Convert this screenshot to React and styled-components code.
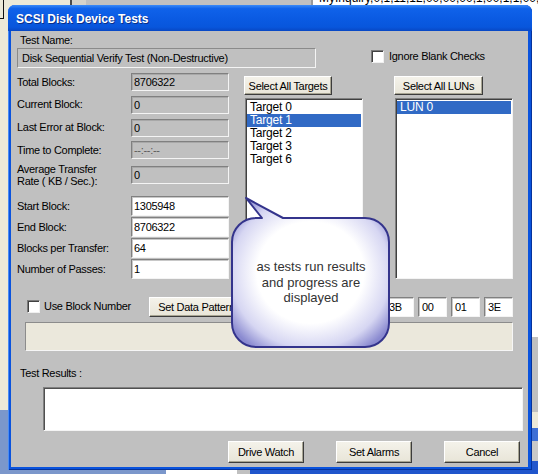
import React from 'react';
import styled, { createGlobalStyle } from 'styled-components';

const GlobalStyle = createGlobalStyle`
  html, body { margin: 0; padding: 0; }
  body {
    background: #ece9d8;
    font-family: 'Liberation Sans', Arial, sans-serif;
  }
`;

const Desktop = styled.div`
  position: relative;
  width: 538px;
  height: 474px;
  overflow: hidden;
  background: #ece9d8;
  font-family: 'Liberation Sans', Arial, sans-serif;
`;

/* windows lying behind the dialog */
const BackWindow = styled.div`
  position: absolute;
  left: ${p => p.$x}px;
  top: ${p => p.$y}px;
  width: ${p => p.$w}px;
  height: ${p => p.$h}px;
  background: ${p => p.$bg};
  box-sizing: border-box;
  border-left: ${p => (p.$edge ? `2px solid ${p.$edge}` : 'none')};
  overflow: hidden;
`;

const BackText = styled.div`
  position: absolute;
  left: ${p => p.$x}px;
  top: ${p => p.$y}px;
  font-size: 12px;
  line-height: 14px;
  color: #000;
  white-space: nowrap;
`;

const CornerMark = styled.div`
  position: absolute;
  left: 0;
  top: 0;
  width: 3px;
  height: 18px;
  border-right: 1px solid #111;
  border-bottom: 1px solid #111;
`;

const Window = styled.div`
  position: absolute;
  left: 8px;
  top: 5px;
  width: 524px;
  height: 465px;
  box-sizing: border-box;
  display: flex;
  flex-direction: column;
  padding: 0 4px 3px 3px;
  background: #0a53dd;
  border-radius: 7px 7px 0 0;
  box-shadow: inset 1px 0 #4a8cf4, inset -1px 0 #06339c, inset 0 -1px #06339c;
`;

const TitleBar = styled.div`
  height: 26px;
  margin: 0 -4px 0 -3px;
  padding: 2px 0 0 8px;
  box-sizing: border-box;
  display: flex;
  align-items: center;
  border-radius: 7px 7px 0 0;
  background: linear-gradient(#3b8af7 0%, #0f62ea 14%, #0a5ae2 55%, #0856dc 85%, #0847c4 100%);
  color: #fff;
  font-size: 12px;
  font-weight: bold;
  text-shadow: 1px 1px #0a2f88;
`;

const Body = styled.div`
  flex: 1;
  display: flex;
  flex-direction: column;
  padding: 3px 0 0 6px;
  background: #c0c0c0;
  font-size: 11px;
  letter-spacing: -0.3px;
  color: #000;
`;

const TopRow = styled.div`
  display: flex;
  align-items: flex-start;
`;

const NameBlock = styled.div`
  width: 299px;
  display: flex;
  flex-direction: column;
`;

const Caption = styled.div`
  height: 13px;
  line-height: 13px;
  padding-left: 3px;
  margin-top: ${p => p.$mt || 0}px;
`;

const NameField = styled.div`
  margin-top: 1px;
  height: 20px;
  box-sizing: border-box;
  line-height: 18px;
  padding-left: 4px;
  border: 1px solid;
  border-color: #8a8a8a #f4f4f4 #f4f4f4 #8a8a8a;
  white-space: nowrap;
`;

const CheckOption = styled.label`
  display: flex;
  align-items: center;
  gap: ${p => p.$gap || 5}px;
  margin-left: ${p => p.$ml}px;
  margin-top: ${p => p.$mt || 0}px;
  width: ${p => (p.$w ? `${p.$w}px` : 'auto')};
  line-height: 13px;
  white-space: nowrap;
`;

const CheckBox = styled.span`
  width: 13px;
  height: 13px;
  box-sizing: border-box;
  background: #fff;
  border: 1px solid;
  border-color: #7a7a7a #f0f0f0 #f0f0f0 #7a7a7a;
  box-shadow: inset 1px 1px #404040;
`;

const MainRow = styled.div`
  display: flex;
  align-items: flex-start;
  margin-top: 5px;
`;

const FieldColumn = styled.div`
  width: 212px;
  display: flex;
  flex-direction: column;
`;

const FieldRow = styled.div`
  display: grid;
  grid-template-columns: 114px 98px;
  align-items: center;
  margin-top: ${p => p.$mt || 0}px;
  min-height: ${p => p.$h || 18}px;
`;

const FieldLabel = styled.div`
  line-height: 12px;
  white-space: nowrap;
  margin-top: ${p => (p.$lift ? -p.$lift * 2 : 0)}px;
`;

const Field = styled.div`
  height: ${p => (p.$edit ? 20 : 18)}px;
  box-sizing: border-box;
  line-height: ${p => (p.$edit ? 18 : 16)}px;
  padding-left: 2px;
  background: ${p => (p.$edit ? '#fff' : '#c0c0c0')};
  color: ${p => (p.$dim ? '#5a5a5a' : '#000')};
  border: 1px solid;
  border-color: #808080 #f4f4f4 #f4f4f4 #808080;
  box-shadow: ${p => (p.$edit ? 'inset 1px 1px #c8c8c8' : 'inset 1px 1px #a8a8a8')};
  white-space: nowrap;
  overflow: hidden;
`;

const ListColumn = styled.div`
  width: 119px;
  margin-left: ${p => p.$ml}px;
  display: flex;
  flex-direction: column;
`;

const PushButton = styled.button`
  width: ${p => p.$w}px;
  height: ${p => p.$h || 19}px;
  margin-top: ${p => p.$mt || 0}px;
  padding: 0;
  box-sizing: border-box;
  font-family: 'Liberation Sans', Arial, sans-serif;
  font-size: 11px;
  letter-spacing: -0.3px;
  color: #000;
  white-space: nowrap;
  overflow: visible;
  background: linear-gradient(#f4f2ea, #e8e5d8);
  border: 1px solid;
  border-color: #ffffff #3c3c3c #3c3c3c #ffffff;
  box-shadow: inset -1px -1px #a8a593;
  cursor: default;
`;

const ListBox = styled.div`
  margin-top: 3px;
  margin-left: 1px;
  width: 118px;
  height: ${p => p.$h}px;
  box-sizing: border-box;
  background: #fff;
  border: 1px solid;
  border-color: #808080 #f4f4f4 #f4f4f4 #808080;
  box-shadow: inset 1px 1px #404040;
  padding: 2px 1px 0 1px;
`;

const ListItem = styled.div`
  height: 13px;
  line-height: 13px;
  padding-left: 3px;
  font-size: 12px;
  letter-spacing: -0.2px;
  background: ${p => (p.$sel ? '#316ac5' : 'transparent')};
  color: ${p => (p.$sel ? '#fff' : '#000')};
`;

const OptionsRow = styled.div`
  display: flex;
  align-items: center;
  height: 21px;
  margin-top: 6px;
`;

const HexGroup = styled.div`
  display: flex;
  gap: 4px;
  margin-left: 9px;
`;

const HexField = styled(Field)`
  width: 29px;
  padding-left: 3px;
`;

const ProgressArea = styled.div`
  margin: 5px 0 0 8px;
  width: 488px;
  height: 29px;
  box-sizing: border-box;
  background: #ebe8dc;
  border: 1px solid;
  border-color: #8c8c8c #f6f6f6 #f6f6f6 #8c8c8c;
`;

const ResultsBox = styled.div`
  margin: 7px 0 0 26px;
  width: 480px;
  height: 44px;
  box-sizing: border-box;
  background: #fff;
  border: 1px solid;
  border-color: #808080 #f4f4f4 #f4f4f4 #808080;
  box-shadow: inset 1px 1px #505050;
`;

const ButtonRow = styled.div`
  display: flex;
  justify-content: flex-end;
  gap: 32px;
  margin-top: 10px;
  padding-right: 8px;
`;

/* callout annotation over the dialog */
const Callout = styled.div`
  position: absolute;
  left: 228px;
  top: 195px;
  width: 166px;
  height: 156px;
`;

const CalloutShape = styled.svg`
  position: absolute;
  left: 0;
  top: 0;
`;

const CalloutText = styled.div`
  position: relative;
  padding-top: 64px;
  text-align: center;
  font-family: 'Liberation Sans', Arial, sans-serif;
  font-size: 13px;
  line-height: 15.5px;
  color: #333;
`;

const targets = ['Target 0', 'Target 1', 'Target 2', 'Target 3', 'Target 6'];
// the first four pattern bytes lie under the callout in the picture
const hexBytes = ['', '', '', '', '3B', '00', '01', '3E'];

const readouts = [
  { label: 'Total Blocks:', value: '8706322', mt: 0 },
  { label: 'Current Block:', value: '0', mt: 5, lift: 1 },
  { label: 'Last Error at Block:', value: '0', mt: 5, lift: 1 },
  { label: 'Time to Complete:', value: '--:--:--', mt: 4, dim: true },
];

const inputs = [
  { label: 'Start Block:', value: '1305948', mt: 8 },
  { label: 'End Block:', value: '8706322', mt: 1 },
  { label: 'Blocks per Transfer:', value: '64', mt: 1 },
  { label: 'Number of Passes:', value: '1', mt: 1 },
];

export default function App() {
  return (
    <Desktop>
      <GlobalStyle />

      <BackWindow $x={70} $y={0} $w={16} $h={12} $bg="#d6d3ca" $edge="#4a4a4a" />
      <BackWindow $x={86} $y={0} $w={226} $h={12} $bg="#c0c0c0" />
      <BackWindow $x={311} $y={0} $w={227} $h={337} $bg="#fff" $edge="#9a9a9a">
        <BackText $x={6} $y={-9}>MyInquiry,0,1,11,12,00,00,00,1,00,1,1,00,0</BackText>
      </BackWindow>
      <BackWindow $x={532} $y={337} $w={6} $h={75} $bg="#c0c0c0" />
      <BackWindow $x={532} $y={428} $w={6} $h={13} $bg="#3d6fd6" />
      <BackWindow $x={532} $y={441} $w={6} $h={20} $bg="#c8c8c8" />
      <BackWindow $x={532} $y={461} $w={6} $h={13} $bg="#2357cc" />
      <BackWindow $x={0} $y={410} $w={8} $h={64} $bg="#7b97cb" />
      <BackWindow $x={0} $y={470} $w={166} $h={4} $bg="#7b97cb" />
      <BackWindow $x={166} $y={470} $w={71} $h={4} $bg="#fff" />
      <BackWindow $x={237} $y={470} $w={13} $h={4} $bg="#c0c0c0" />
      <BackWindow $x={250} $y={470} $w={288} $h={4} $bg="#1f55cc" />
      <CornerMark />

      <Window>
        <TitleBar>SCSI Disk Device Tests</TitleBar>
        <Body>
          <TopRow>
            <NameBlock>
              <Caption>Test Name:</Caption>
              <NameField>Disk Sequential Verify Test (Non-Destructive)</NameField>
            </NameBlock>
            <CheckOption $ml={55} $mt={16}>
              <CheckBox />
              Ignore Blank Checks
            </CheckOption>
          </TopRow>

          <MainRow>
            <FieldColumn>
              {readouts.map(r => (
                <FieldRow key={r.label} $mt={r.mt}>
                  <FieldLabel $lift={r.lift}>{r.label}</FieldLabel>
                  <Field $dim={r.dim}>{r.value}</Field>
                </FieldRow>
              ))}
              <FieldRow $mt={3} $h={26}>
                <FieldLabel>
                  Average Transfer
                  <br />
                  Rate ( KB / Sec.):
                </FieldLabel>
                <Field>0</Field>
              </FieldRow>
              {inputs.map(r => (
                <FieldRow key={r.label} $mt={r.mt} $h={20}>
                  <FieldLabel>{r.label}</FieldLabel>
                  <Field $edit>{r.value}</Field>
                </FieldRow>
              ))}
            </FieldColumn>

            <ListColumn $ml={15}>
              <PushButton $w={88} $mt={3}>Select All Targets</PushButton>
              <ListBox $h={192}>
                {targets.map(t => (
                  <ListItem key={t} $sel={t === 'Target 1'}>{t}</ListItem>
                ))}
              </ListBox>
            </ListColumn>

            <ListColumn $ml={31}>
              <PushButton $w={89} $mt={3}>Select All LUNs</PushButton>
              <ListBox $h={181}>
                <ListItem $sel>LUN 0</ListItem>
              </ListBox>
            </ListColumn>
          </MainRow>

          <OptionsRow>
            <CheckOption $ml={10} $w={122} $gap={4}>
              <CheckBox />
              Use Block Number
            </CheckOption>
            <PushButton $w={95} $h={20}>Set Data Pattern</PushButton>
            <HexGroup>
              {hexBytes.map((b, i) => (
                <HexField key={i} $edit>{b}</HexField>
              ))}
            </HexGroup>
          </OptionsRow>

          <ProgressArea />

          <Caption $mt={16}>Test Results :</Caption>
          <ResultsBox />

          <ButtonRow>
            <PushButton $w={76} $h={22}>Drive Watch</PushButton>
            <PushButton $w={76} $h={22}>Set Alarms</PushButton>
            <PushButton $w={76} $h={22}>Cancel</PushButton>
          </ButtonRow>
        </Body>
      </Window>

      <Callout>
        <CalloutShape width="166" height="156" viewBox="0 0 166 156">
          <defs>
            <radialGradient id="bubbleFill" cx="50%" cy="50%" r="62%">
              <stop offset="0" stopColor="#ffffff" />
              <stop offset="0.55" stopColor="#ffffff" />
              <stop offset="0.82" stopColor="#d6d6f2" />
              <stop offset="1" stopColor="#8a8ad0" />
            </radialGradient>
          </defs>
          <path
            d="M28 23 L34 23 L18 3 L55 23 L137 23 A24 24 0 0 1 161 47 L161 128 A24 24 0 0 1 137 152 L28 152 A24 24 0 0 1 4 128 L4 47 A24 24 0 0 1 28 23 Z"
            fill="url(#bubbleFill)"
            stroke="#34348c"
            strokeWidth="2"
            strokeLinejoin="round"
          />
        </CalloutShape>
        <CalloutText>
          as tests run results
          <br />
          and progress are
          <br />
          displayed
        </CalloutText>
      </Callout>
    </Desktop>
  );
}
